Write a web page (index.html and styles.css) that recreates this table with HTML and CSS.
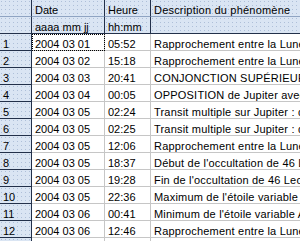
FILE: index.html
```html
<!DOCTYPE html>
<html lang="fr">
<head>
<meta charset="utf-8">
<link rel="stylesheet" href="styles.css">
</head>
<body>
<table class="grid">
  <colgroup>
    <col class="c-num"><col class="c-date"><col class="c-time"><col class="c-desc">
  </colgroup>
  <thead>
    <tr class="h1"><th class="rh"></th><th>Date</th><th>Heure</th><th class="desc">Description du phénomène</th></tr>
    <tr class="h2"><th class="rh"></th><th>aaaa mm jj</th><th>hh:mm</th><th class="desc"></th></tr>
  </thead>
  <tbody>
    <tr><th class="rh">1</th><td class="sel">2004 03 01</td><td>05:52</td><td class="desc">Rapprochement entre la Lune et Vénus</td></tr>
    <tr><th class="rh">2</th><td>2004 03 02</td><td>15:18</td><td class="desc">Rapprochement entre la Lune et Saturne</td></tr>
    <tr><th class="rh">3</th><td>2004 03 03</td><td>20:41</td><td class="desc">CONJONCTION SUPÉRIEURE de Mercure</td></tr>
    <tr><th class="rh">4</th><td>2004 03 04</td><td>00:05</td><td class="desc">OPPOSITION de Jupiter avec le Soleil</td></tr>
    <tr><th class="rh">5</th><td>2004 03 05</td><td>02:24</td><td class="desc">Transit multiple sur Jupiter : deux satellites</td></tr>
    <tr><th class="rh">6</th><td>2004 03 05</td><td>02:25</td><td class="desc">Transit multiple sur Jupiter : deux ombres</td></tr>
    <tr><th class="rh">7</th><td>2004 03 05</td><td>12:06</td><td class="desc">Rapprochement entre la Lune et Jupiter</td></tr>
    <tr><th class="rh">8</th><td>2004 03 05</td><td>18:37</td><td class="desc">Début de l'occultation de 46 Leo (mag 5,5)</td></tr>
    <tr><th class="rh">9</th><td>2004 03 05</td><td>19:28</td><td class="desc">Fin de l'occultation de 46 Leo (mag 5,5)</td></tr>
    <tr><th class="rh">10</th><td>2004 03 05</td><td>22:36</td><td class="desc">Maximum de l'étoile variable delta Cephei</td></tr>
    <tr><th class="rh">11</th><td>2004 03 06</td><td>00:41</td><td class="desc">Minimum de l'étoile variable Algol</td></tr>
    <tr><th class="rh">12</th><td>2004 03 06</td><td>12:46</td><td class="desc">Rapprochement entre la Lune et Régulus</td></tr>
    <tr class="last"><th class="rh"></th><td></td><td></td><td></td></tr>
  </tbody>
</table>
</body>
</html>
```
FILE: styles.css
```css
html, body {
  margin: 0;
  padding: 0;
  background: #ffffff;
  overflow: hidden;
  width: 300px;
  height: 241px;
}

.grid {
  border-collapse: separate;
  border-spacing: 0;
  table-layout: fixed;
  width: 401px;
  font-family: "Liberation Sans", Arial, sans-serif;
  font-size: 11px;
  color: #000;
}

.c-num { width: 32px; }
.c-date { width: 73px; }
.c-time { width: 46px; }
.c-desc { width: 250px; }

.grid th,
.grid td {
  height: 16px;
  padding: 0 0 0 3px;
  line-height: 12px;
  vertical-align: bottom;
  text-align: left;
  font-weight: normal;
  white-space: nowrap;
  overflow: hidden;
  border-right: 1px solid #c6c6c6;
  border-bottom: 1px solid #c6c6c6;
}

.grid .desc {
  letter-spacing: 0.2px;
}

.grid th {
  background-color: #dae5f3;
  background-image: radial-gradient(circle at 0.5px 0.5px, #aebfd8 0.6px, rgba(0,0,0,0) 0.7px);
  background-size: 4px 4px;
  background-position: 1px 1px;
}

.grid thead th {
  border-right: 1px solid #22304a;
  border-bottom: 1px solid #8fa4c2;
}

.grid thead .h2 th {
  border-bottom: 1px solid #22304a;
}

.grid tbody th.rh {
  border-right: 1px solid #22304a;
  border-bottom: 1px solid #22304a;
}

.grid .sel {
  outline: 1px dotted #000;
  outline-offset: -1px;
}

.grid .last th,
.grid .last td {
  border-bottom: none;
}
```
